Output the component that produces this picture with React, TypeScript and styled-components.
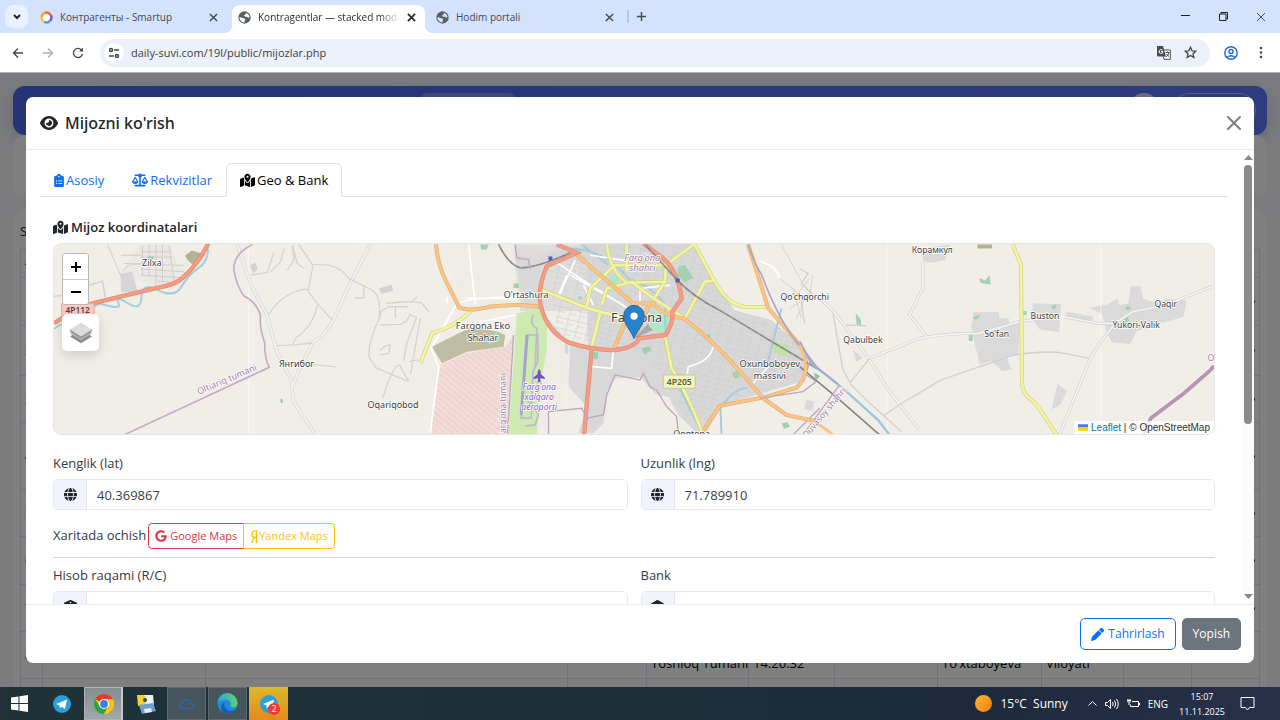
import React from "react";
import styled, { createGlobalStyle, css } from "styled-components";
import {
  FaEye,
  FaScaleBalanced,
  FaMapLocationDot,
  FaGlobe,
  FaGoogle,
  FaYandex,
  FaBuildingColumns,
  FaLandmark,
  FaClipboardList,
} from "react-icons/fa6";

const GlobalStyle = createGlobalStyle`
  *, *::before, *::after { box-sizing: border-box; }
  html, body { margin: 0; }
  body {
    font-family: "Open Sans", "Noto Sans", sans-serif;
    font-size: 13px;
    line-height: 20px;
    color: #212529;
  }
  button, input { font: inherit; color: inherit; }
  button { padding: 0; border: 0; background: none; cursor: pointer; }
  svg { display: block; flex: none; }
`;

const Desktop = styled.div`
  display: flex;
  flex-direction: column;
  height: 100vh;
  overflow: hidden;
`;

/* ---------- browser chrome ---------- */

const TabStrip = styled.header`
  display: flex;
  align-items: flex-end;
  height: 33px;
  flex: none;
  background: #d3e2fd;
  color: #454a52;
`;

const TabSearch = styled.button`
  display: grid;
  place-items: center;
  width: 23px;
  height: 23px;
  margin: 0 6px 5px 5px;
  border-radius: 8px;
  background: #eaf1fe;
`;

const Tab = styled.div<{ $active?: boolean }>`
  position: relative;
  display: flex;
  align-items: center;
  gap: 7px;
  flex: 0 1 198px;
  min-width: 0;
  height: 28px;
  padding: 0 14px 4px 6px;
  font-size: 10px;
  ${(p) =>
    p.$active &&
    css`
      flex-basis: 193px;
      margin-right: 5px;
      padding-right: 9px;
      border-radius: 8px 8px 0 0;
      background: #fff;
      color: #2a2d32;
      &::before,
      &::after {
        content: "";
        position: absolute;
        bottom: 0;
        width: 8px;
        height: 8px;
      }
      &::before {
        left: -8px;
        background: radial-gradient(circle at 0 0, transparent 8px, #fff 8px);
      }
      &::after {
        right: -8px;
        background: radial-gradient(circle at 100% 0, transparent 8px, #fff 8px);
      }
    `}
`;

const TabTitle = styled.span<{ $fade?: boolean }>`
  flex: 1;
  min-width: 0;
  overflow: hidden;
  white-space: nowrap;
  ${(p) => p.$fade && "mask-image: linear-gradient(90deg, #000 85%, transparent);"}
`;

const IconButton = styled.button`
  display: grid;
  place-items: center;
  flex: none;
`;

const NewTab = styled(IconButton)`
  width: 26px;
  height: 33px;
  position: relative;
  &::before {
    content: "";
    position: absolute;
    left: -1px;
    top: 10px;
    width: 2px;
    height: 13px;
    background: #a9c9fb;
  }
`;

const WindowControls = styled.div`
  display: flex;
  margin-left: auto;
`;

const WindowButton = styled(IconButton)`
  width: 38px;
  height: 33px;
`;

const Toolbar = styled.div`
  display: flex;
  align-items: center;
  height: 40px;
  flex: none;
  padding: 0 4px 0 3px;
  background: #fff;
  border-bottom: 1px solid #b4b6ba;
  color: #43474c;
`;

const NavButton = styled(IconButton)`
  width: 30px;
  height: 30px;
`;

const Omnibox = styled.div`
  display: flex;
  align-items: center;
  flex: 1;
  height: 28px;
  margin: 0 6px 0 7px;
  padding: 0 13px 0 4px;
  gap: 7px;
  border-radius: 14px;
  background: #ebf0fa;
  font-size: 11px;
`;

const SiteInfo = styled(IconButton)`
  width: 20px;
  height: 20px;
  border-radius: 50%;
  background: #fff;
`;

const Address = styled.input`
  flex: 1;
  min-width: 0;
  padding: 0;
  border: 0;
  outline: 0;
  background: none;
  color: #3c4045;
`;

const OmniboxActions = styled.div`
  display: flex;
  gap: 13px;
`;

/* ---------- page behind the dialog ---------- */

const Viewport = styled.main`
  position: relative;
  flex: 1;
  min-height: 0;
  overflow: hidden;
  background: #f6f7fc;
`;

const Page = styled.div`
  padding: 13px 13px 0;
`;

const NavBar = styled.nav`
  display: flex;
  justify-content: flex-end;
  align-items: flex-start;
  gap: 14px;
  height: 49px;
  padding: 7px 11px;
  border-radius: 12px;
  background: linear-gradient(90deg, #4a66ee, #5c78ff);
  box-shadow: 0 4px 14px #c9cfe8;
`;

const NavSearch = styled.div`
  width: 96px;
  height: 26px;
  margin-right: auto;
  margin-left: 396px;
  border-radius: 8px;
  background: #8295ee;
`;

const Avatar = styled.div`
  width: 28px;
  height: 28px;
  border-radius: 50%;
  background: #d8dcf0;
`;

const UserPill = styled.div`
  width: 84px;
  height: 34px;
  border: 1px solid #b4c0f8;
  border-radius: 17px;
`;

const Card = styled.section<{ $flat?: boolean }>`
  padding: ${(p) => (p.$flat ? "30px" : "9px 7px")};
  margin-bottom: ${(p) => (p.$flat ? "13px" : "0")};
  border-radius: 12px;
  background: #fff;
`;

const SearchLabel = styled.p`
  margin: 4px 0 8px;
`;

const Grid = styled.table`
  width: 100%;
  border-collapse: collapse;
  table-layout: fixed;
  color: #000;
  td, th {
    padding: 3px 4px;
    border: 1px solid #dfe1fb;
    text-align: left;
    vertical-align: middle;
    line-height: 17px;
    white-space: nowrap;
    overflow: hidden;
  }
`;

const GridRow = styled.tr<{ $height: number }>`
  height: ${(p) => p.$height}px;
`;

const RowLink = styled.a`
  display: flex;
  justify-content: flex-end;
  color: #0d3f8f;
`;

/* ---------- dialog ---------- */

const Backdrop = styled.div`
  position: absolute;
  inset: 0;
  display: flex;
  padding: 24px 26px;
  background: rgba(0, 0, 0, 0.5);
`;

const Dialog = styled.section`
  display: flex;
  flex-direction: column;
  flex: 1;
  min-width: 0;
  border-radius: 7px;
  background: #fff;
  overflow: hidden;
`;

const DialogHeader = styled.header`
  display: flex;
  align-items: center;
  justify-content: space-between;
  flex: none;
  height: 53px;
  padding: 0 13px 0 14px;
  border-bottom: 1px solid #e9ebee;
`;

const DialogTitle = styled.h1`
  display: flex;
  align-items: center;
  gap: 7px;
  margin: 0;
  font-family: "Noto Sans", "Open Sans", sans-serif;
  font-size: 16px;
  font-weight: 500;
  line-height: 24px;
`;

const DialogMain = styled.div`
  display: flex;
  flex: 1;
  min-height: 0;
`;

const DialogScroll = styled.div`
  flex: 1;
  min-width: 0;
  padding: 13px 14px 0;
  overflow-y: auto;
  scrollbar-width: none;
`;

const ScrollBar = styled.div`
  display: flex;
  flex-direction: column;
  align-items: center;
  gap: 5px;
  flex: none;
  width: 12px;
  padding: 5px 0;
  background: #fcfcfc;
  color: #8a8a8a;
`;

const ScrollTrack = styled.div`
  flex: 1;
  width: 8px;
`;

const ScrollThumb = styled.div`
  height: 61%;
  border-radius: 4px;
  background: #8b8b8b;
`;

const TabList = styled.div`
  display: flex;
  border-bottom: 1px solid #dee2e6;
`;

const TabButton = styled.button<{ $active?: boolean }>`
  display: flex;
  align-items: center;
  gap: 2px;
  height: 34px;
  margin-bottom: -1px;
  padding: 0 13px;
  border: 1px solid transparent;
  border-radius: 6px 6px 0 0;
  color: #0d6efd;
  ${(p) =>
    p.$active &&
    css`
      color: #000;
      background: #fff;
      border-color: #dee2e6 #dee2e6 #fff;
    `}
`;

const ClipboardIcon = styled(FaClipboardList)`
  width: 10px;
  height: 13px;
`;

const YandexIcon = styled(FaYandex)`
  width: 8px;
  height: 13px;
`;

const Pane = styled.div`
  padding: 20px 13px;
`;

const PaneTitle = styled.h2`
  display: flex;
  align-items: center;
  gap: 3px;
  margin: 0 0 6px;
  font-size: 13px;
  font-weight: 600;
  line-height: 20px;
`;

const FieldRow = styled.div`
  display: grid;
  grid-template-columns: 1fr 1fr;
  gap: 13px;
`;

const FieldLabel = styled.label`
  display: block;
  margin-bottom: 6px;
  color: #343a40;
`;

const InputGroup = styled.div`
  display: flex;
  height: 31px;
  border: 1px solid #e6e8ee;
  border-radius: 5px;
  overflow: hidden;
`;

const InputAddon = styled.span`
  display: flex;
  align-items: center;
  justify-content: center;
  width: 33px;
  border-right: 1px solid #e2e6f2;
  background: #f1f4ff;
`;

const TextInput = styled.input`
  flex: 1;
  min-width: 0;
  padding: 0 10px;
  border: 0;
  outline: 0;
  background: #fff;
  color: #3a3f44;
`;

const OpenRow = styled.div`
  display: flex;
  align-items: flex-start;
  gap: 2px;
  margin: 13px 0 8px;
  color: #343a40;
  line-height: 24px;
`;

const LinkGroup = styled.div`
  display: flex;
`;

const MapLink = styled.a<{ $color: string; $side: "left" | "right" }>`
  display: flex;
  align-items: center;
  gap: ${(p) => (p.$side === "left" ? "3px" : "1px")};
  height: 26px;
  padding: 0 6px;
  margin-left: ${(p) => (p.$side === "left" ? "0" : "-1px")};
  border: 1px solid ${(p) => p.$color};
  border-radius: ${(p) => (p.$side === "left" ? "4px 0 0 4px" : "0 4px 4px 0")};
  color: ${(p) => p.$color};
  font-size: 11px;
  text-decoration: none;
`;

const Divider = styled.hr`
  margin: 0 0 7px;
  border: 0;
  border-top: 1px solid #d3d4d5;
`;

const DialogFooter = styled.footer`
  display: flex;
  align-items: center;
  justify-content: flex-end;
  gap: 6px;
  flex: none;
  height: 59px;
  padding: 0 13px;
  border-top: 1px solid #eceef1;
`;

const Button = styled.button<{ $primary?: boolean }>`
  display: flex;
  align-items: center;
  gap: 4px;
  height: 32px;
  padding: 0 10px;
  border: 1px solid ${(p) => (p.$primary ? "#0d6efd" : "#6c757d")};
  border-radius: 5px;
  background: ${(p) => (p.$primary ? "#fff" : "#6c757d")};
  color: ${(p) => (p.$primary ? "#0d6efd" : "#fff")};
  font-size: 12px;
`;

/* ---------- map ---------- */

const MapFrame = styled.div`
  position: relative;
  height: 192px;
  margin-bottom: 18px;
  border: 1px solid #e4e6ea;
  border-radius: 8px;
  background: #f1eee8;
  overflow: hidden;
`;

const MapCanvas = styled.svg`
  width: 100%;
  height: 100%;
`;

const MapControls = styled.div`
  position: absolute;
  left: 8px;
  top: 9px;
  display: flex;
  flex-direction: column;
  gap: 9px;
`;

const ZoomBox = styled.div`
  width: 27px;
  border: 1px solid #b9b8b4;
  border-radius: 3px;
  overflow: hidden;
`;

const ZoomButton = styled.button`
  display: grid;
  place-items: center;
  width: 100%;
  height: 25px;
  background: #fff;
  color: #000;
  & + & { border-top: 1px solid #ccc; }
`;

const LayersButton = styled.button`
  display: grid;
  place-items: center;
  width: 37px;
  height: 37px;
  border-radius: 5px;
  background: #fff;
  box-shadow: 0 4px 12px rgba(0, 0, 0, 0.15);
`;

const Attribution = styled.div`
  position: absolute;
  right: 0;
  bottom: 0;
  display: flex;
  align-items: center;
  gap: 3px;
  padding: 0 4px;
  background: rgba(255, 255, 255, 0.8);
  color: #333;
  font: 10px/13px "Liberation Sans", sans-serif;
  a { color: #0078a8; text-decoration: none; }
`;

/* ---------- taskbar ---------- */

const TaskBar = styled.footer`
  display: flex;
  align-items: center;
  height: 33px;
  flex: none;
  background: linear-gradient(90deg, #1f3238 0%, #1e2f37 45%, #1c2a3c 75%, #28304a 100%);
  color: #fff;
`;

const AppGroup = styled.div<{ $gap: number }>`
  display: flex;
  gap: ${(p) => p.$gap}px;
  margin-right: 2px;
`;

const AppButton = styled.button<{ $tone?: "active" | "open" | "alert" }>`
  display: grid;
  place-items: center;
  width: 39px;
  height: 33px;
  ${(p) =>
    p.$tone === "active" &&
    "background: linear-gradient(#858e90, #a0a8a9); box-shadow: inset -2px 0 #c2c7c8, inset 0 0 0 1px #aeb4b5;"}
  ${(p) => p.$tone === "open" && "background: #46555c; box-shadow: inset 0 0 0 1px #5d6b71;"}
  ${(p) => p.$tone === "alert" && "background: linear-gradient(#dcb92c, #e68a1e);"}
`;

const Tray = styled.div`
  display: flex;
  align-items: center;
  gap: 8px;
  margin-left: auto;
  padding-right: 25px;
  font-size: 10px;
`;

const Weather = styled.div`
  display: flex;
  align-items: center;
  gap: 8px;
  margin-right: 12px;
  font-size: 12px;
  white-space: pre;
`;

const Sun = styled.span`
  width: 17px;
  height: 17px;
  border-radius: 50%;
  background: linear-gradient(135deg, #fdb92b, #f07a1a);
`;

const Clock = styled.time`
  margin: 0 7px 0 3px;
  text-align: center;
  font-size: 9px;
  line-height: 15px;
`;

/* ---------- drawings ---------- */

const Cross = ({ size = 9, width = 2 }: { size?: number; width?: number }) => (
  <svg width={size} height={size} viewBox="0 0 10 10" stroke="currentColor" strokeWidth={width} fill="none">
    <path d="M1 1l8 8M9 1l-8 8" />
  </svg>
);

const PenIcon = () => (
  <svg width="13" height="13" viewBox="0 0 512 512" fill="currentColor">
    <path d="M362.700 19.300L314.300 67.700 444.300 197.700l48.400-48.400c25-25 25-65.500 0-90.500L453.300 19.300c-25-25-65.500-25-90.500 0zm-71 71L58.600 323.500c-10.400 10.400-18 23.300-22.200 37.400L1 481.200C-1.500 489.700 .8 498.800 7 505s15.300 8.500 23.700 6.100l120.300-35.400c14.100-4.200 27-11.800 37.400-22.200L421.700 220.300 291.700 90.300z" />
  </svg>
);

const GlobeFavicon = ({ ground = "#d3e2fd" }: { ground?: string }) => (
  <svg width="13" height="13" viewBox="0 0 16 16">
    <circle cx="8" cy="8" r="7.600" fill="#595e64" />
    <path d="M9.500 2.200c2.800.7 4.600 3 4.700 5.600l-1.700.6-1.300-1.400H8.600L7.400 5.600l1.200-1.200 1.300-.3z" fill={ground} />
    <path d="M1.800 7.500l3.700 1 2.300.6 1.300 1.500-1 1.500.2 2c-3.500.4-6.700-2.600-6.500-6.600z" fill={ground} />
  </svg>
);

const RingFavicon = () => (
  <svg width="13" height="13" viewBox="0 0 16 16" fill="none" strokeWidth="3">
    <circle cx="8" cy="8" r="6" fill="#fff" />
    <path d="M2 8a6 6 0 0 1 4-5.700" stroke="#f0a030" />
    <path d="M6 2.300A6 6 0 0 1 13 4.700" stroke="#e8684a" />
    <path d="M13 4.700A6 6 0 0 1 12.200 12.200" stroke="#7a52c0" />
    <path d="M12.200 12.200A6 6 0 0 1 5 13.200" stroke="#3fa0e0" />
    <path d="M5 13.200A6 6 0 0 1 2 8" stroke="#f3c64a" />
  </svg>
);

const TelegramIcon = ({ badge }: { badge?: string }) => (
  <svg width="26" height="26" viewBox="0 0 26 26">
    <circle cx="13" cy="13" r="9" fill="#2b9fd8" />
    <path d="M7 13l11-4.500-2 9.500-3.500-2.300-1.700 1.600-.4-3z" fill="#fff" />
    {badge && (
      <>
        <circle cx="18" cy="18" r="6" fill="#ee3b35" />
        <text x="18" y="21" textAnchor="middle" fontSize="9" fill="#fff">{badge}</text>
      </>
    )}
  </svg>
);

const ChromeIcon = () => (
  <svg width="20" height="20" viewBox="0 0 20 20">
    <circle cx="10" cy="10" r="10" fill="#fbc116" />
    <path d="M10 10L1.300 5A10 10 0 0 1 18.700 5z" fill="#e33b2e" />
    <path d="M1.300 5A10 10 0 0 0 10 20l4.300-7.500L10 10 5.700 12.500z" fill="#2aa24c" />
    <path d="M10 5h8.700A10 10 0 0 1 10 20l4.300-7.500z" fill="#fbc116" />
    <circle cx="10" cy="10" r="5" fill="#fff" />
    <circle cx="10" cy="10" r="3.900" fill="#3b7de8" />
  </svg>
);

const FilesIcon = () => (
  <svg width="20" height="20" viewBox="0 0 20 20">
    <path d="M3 1h14l1 10-13 2z" fill="#eef2f4" />
    <path d="M1 1h7l2 2v8l-8 1z" fill="#f6cf33" />
    <path d="M3 11l14-2 3 8-14 3z" fill="#6ea0cf" />
    <path d="M8 15l7-1 1 4-7 1z" fill="#eaf1f6" />
    <circle cx="9" cy="6" r="2" fill="#3d4548" />
  </svg>
);

const EdgeIcon = () => (
  <svg width="21" height="21" viewBox="0 0 21 21">
    <defs>
      <linearGradient id="edgeTop" x1="0" y1="0" x2="1" y2="0">
        <stop offset="0" stopColor="#2aa7e0" />
        <stop offset="1" stopColor="#5fd36a" />
      </linearGradient>
    </defs>
    <circle cx="10.500" cy="10.500" r="10" fill="#1e8ad8" />
    <path d="M.5 10A10 10 0 0 1 20.500 10c0 3-2 4.500-4.500 4.500-2 0-3-.8-2.500-2C14.500 9 12 6.500 8.500 6.500S1.500 8 .5 10z" fill="url(#edgeTop)" />
    <path d="M8 9c-2 3 0 8 5 9 2.500.4 4.500-.5 5.500-1.500-2 3.500-7 5-11 3.500C3 18 3 11 8 9z" fill="#1b5cae" />
  </svg>
);

const label = { textAnchor: "middle" as const, fill: "#3c3c3c", stroke: "#fff", strokeWidth: 4, paintOrder: "stroke" };

const secondaryRoads =
  "M0 385l35-90q70-20 120-70M355 160l150 60 110 30M560 28q10 80 60 115l115-3 3-50 85-64 60 110q40 75 95 80h70M640 145l60 45 95 60 60-110 35-5M500 215l10-55 75-70h150M540 235l-25 100M545 210l15-50 80-20M620 28v80M735 140l-35 55M735 300l20 100q50 80 95 200";
const primaryRoads =
  "M47 28q5 60 30 110l40 80q30 12 90-3 90-10 150 0M460 50l180 155h60q25 35 90 45 90 60 240 240l70 50 90 20M640 205L580 345M690 205l-45 100M985 28l60 190 85 100q30 40 30 80-5 40-30 60l-100 30-130 25-50 75";
const ringRoad =
  "M410 28l60 25-90 40q-30 70-18 120 20 80 85 110 80 25 140 22 60-8 70-35l80-10q25-40 20-70l28-40q-10-80-55-120l-60-45M515 340L492 600";
const railway = "M235 28q30 60 65 70 50 0 150-45M675 28l100 110q50 50 120 85l300 180";
const westHighway = "M40 265q60-45 115-60l190-46q60-10 80-30 50-45 78-105";
const westRoads = "M590 28l40 120 48 90 30 110 45 90 5 60 65 100M990 28l-58 110-55 120q-20 40-60 65l-45 90-15 40";
const eastRoads =
  "M370 80v80l-40 80 50 62M210 370l150-60q80-15 180-15l120-35 60-8M800 246l90 18 55 2 55-36 100-20 140-56M945 270q-60 70-80 120L780 600M20 170q60 20 120 110l80 110 50 80 90 115";
const eastSecondary = "M640 28l25 60 3 350q0 30 15 45l30 28 60 90";

const Road = ({ d, casing, fill, width }: { d: string; casing: string; fill: string; width: number }) => (
  <>
    <path d={d} stroke={casing} strokeWidth={width + 4} />
    <path d={d} stroke={fill} strokeWidth={width} />
  </>
);

function FerganaMap() {
  return (
    <MapCanvas viewBox="0 0 3486 576" preserveAspectRatio="xMidYMid slice" fontFamily="Noto Sans, sans-serif">
      <defs>
        <pattern id="hatch" width="14" height="14" patternUnits="userSpaceOnUse" patternTransform="rotate(40)">
          <rect width="14" height="14" fill="#f2dcd8" />
          <path d="M0 2h14" stroke="#efcbc8" strokeWidth="3" />
        </pattern>
        <pattern id="blocks" width="32" height="32" patternUnits="userSpaceOnUse" patternTransform="rotate(14)">
          <path d="M0 10h32M12 0v32M12 24h20" stroke="#cfcece" strokeWidth="2" fill="none" />
        </pattern>
      </defs>

      <g transform="translate(-39 -24)" fill="none">
        <path d="M300 28h90l20 60 30 30-30 30-60 8-50-20-50-10 10-50z" fill="#ebe9e4" />
        <path d="M305 30v90M325 30v95M345 26v130M365 30v110M385 30l15 110M300 50h90M300 66h95M240 60h62M250 85l180 6M300 102l130 8M300 120l120 8M350 138l50 4M245 110q10-25 50-24M200 28l38 90 15 50" stroke="#cfcdcc" strokeWidth="3" />
        <path d="M240 115l35-5 15 60-50 2z" fill="#d6d5da" />
        <path d="M433 62l20-16 40 12-28 34q-22-8-32-30z" fill="#b5b294" />
        <path d="M322 64h16v8h-16z" fill="#8dc9a5" />
        <path d="M145 150l40-12 8 50M40 184l26-4" stroke="#d4d3d8" strokeWidth="5" />
        <path d="M502 40q0 40-30 60t-50 55-70 10-50 20-40 20-30-3-30 10-40 5M40 282q20-18 50-20" stroke="#9cd0e2" strokeWidth="6" />
        <Road d={westHighway} casing="#dd8a72" fill="#f69b80" width={9} />
        <path d="M623 26v574" stroke="#f9f7f4" strokeWidth="3" />
        <Road d={westRoads} casing="#d6d5d8" fill="#f4f2f1" width={6} />
        <path d="M630 120l50-8 20-60M690 110l30-30 10-40M740 105l20-30-5-45 15 55 20 15M775 28l40 60 50 2q40 10 60 40l70 35q22 14 22 50v34q-38 80-30 120l20 30 95 40M683 240q30-50 80-70 30-12 40-5l15-75M800 165l30 40 45 50M830 210q-10 60-65 100l-10 20M710 332l60-3 45-5M970 150v38h-28M815 388l70 8M1020 245v-15l25-15h58M1020 270l60-2q25-8 28-30l20 10-30 80-8 50M1065 215v35M1020 345q15-15 30-15l-5 25-25 5M1105 380l30-5M1140 250l-30 170M1105 440l-28-50q-20 0-50 100M1115 200l15-15M1035 205q90-10 110 0l20 25" stroke="#d6d2d0" strokeWidth="4" />
        <path d="M635 28q-60 30-55 80 10 50 30 75 40 20 50 60-5 30 12 80 0 50 14 74L250 600" stroke="#c6aec6" strokeWidth="5" />
        <path d="M628 90l16-8 8 20-14 14zM1016 160l38-12 4 20-36 8z" fill="#d3d1d3" />
        <path d="M720 492h6v12h-6z" fill="#8dc9a5" />
        <path d="M62 206h98v34h-98z" fill="#f3cdc5" stroke="#e8a99c" strokeWidth="3" />
      </g>

      <g transform="translate(1101 -24)" fill="none">
        <path d="M40 28h240l20 80 50 50 5 50-190 5-30-30z" fill="#efece6" />
        <path d="M280 28h230v200H300z" fill="#dedddc" />
        <path d="M355 60L500 26h325l60 110 60 90 110 30 80 70 25 80-20 35-105 32-125 35-40 65-14 30-30-12-50-50-30-55-35-5-20-20-30-35-75 5-25 40-6 130-50 50-5-560z" fill="#d9d8d8" />
        <path d="M285 60l70 10 10 160 90 100-5 115 60 50v-120l-80-20-115-130z" fill="#d9d8d8" />
        <path d="M355 60L500 26h325l60 110 60 90 110 30 80 70 25 80-20 35-105 32-125 35-40 65-74-32-90-140-35-55-105 2-150-40-35-200z" fill="url(#blocks)" />
        <path d="M590 425l25 60-60 115H385l5-70 55-10v-190l75 25v170l30 20z" fill="#f1eee8" />
        <path d="M450 330h140v85l-30 20-10 130-30 30h-45l25-80-55-60z" fill="#d9d8d8" />
        <path d="M375 245q20 50 60 80l-10 200-40 10-30 60h-35z" fill="#efece6" />
        <path d="M35 335l110-55q70 0 110 20l-5 35-110 15-75 35z" fill="#bfbda2" />
        <path d="M60 390l80-35 115-20 25-35-20 300H30z" fill="url(#hatch)" />
        <path d="M290 235l65-15 25 40v80l-20 120-10 140h-85z" fill="#cdebb0" />
        <path d="M195 310l35-18 10 25-35 10z" fill="#a8e0c4" />
        <path d="M318 300h35v80l-15 30-5 140h-30z" stroke="#bdb9cf" strokeWidth="5" />
        <path d="M321 300L303 540" stroke="#a8a4c8" strokeWidth="9" />
        <path d="M315 490q30 30 40 50l-10 30-30 3M338 240q-10 30 12 40l-5 120" stroke="#bdb9cf" strokeWidth="5" />
        <path d="M555 135l30-20 15 15-30 40zM540 105l20 8-5 20-15-10zM690 225l60 20-5 50-50-10z" fill="#aee8c6" />
        <path d="M775 95l20-6 25 40-25 14-20-20zM180 28h26l-8 16h-15zM665 340l25-6 5 12-22 14zM280 145h16v14h-16zM1085 566l18-4 8 14-18 6zM935 415l18-8 8 18-14 8z" fill="#a3d0ae" />
        <path d="M1055 318l58 14-12 32-35-8z" fill="#c0e3a5" />
        <path d="M475 184h10v8h-10zM862 298h10v14h-10zM520 352h14v20h-14z" fill="#83dcb4" />
        <path d="M445 40q110 0 180 90 80 30 110 80 0 130 20 190t90 190M640 150l60 40M905 600l-3-80q40-60 80-60M1045 380l40-160M485 28q50 40 80 60" stroke="#a5cbdc" strokeWidth="6" />
        <path d="M400 75l80 55 160 100M465 75l-45 100M510 60l130 20M450 120l150 85M490 150l30 60M660 240v-80l90-10M440 120l-25 60M140 190h140M80 205v-20M880 335q-10 45-75 60l-5 40M515 395l60 5 5-60M1000 445l55-60M1020 80q50 10 60 50M30 335l25 60-25 200M285 240l-105 20M35 335l75-130q60-20 175-20l75-10M145 28l20 180" stroke="#fff" strokeWidth="5" />
        <path d="M1085 28l60 110M1080 130l50 40 20 40-20 40M1090 190l40-10 40-50M1110 220l60-40 10-60M1120 160l25 90" stroke="#d4d2d1" strokeWidth="3" />
        <Road d={secondaryRoads} casing="#d0d085" fill="#f1f59f" width={8} />
        <Road d={primaryRoads} casing="#e3b070" fill="#fbc486" width={8} />
        <Road d={ringRoad} casing="#e08c76" fill="#f59c86" width={9} />
        <path d={railway} stroke="#858588" strokeWidth="5" />
        <path d={railway} stroke="#b0afb0" strokeWidth="2" strokeDasharray="12 12" />
        <path d="M385 64h12v12h-12zM767 130h12v12h-12z" fill="#4e5eb0" />
        <path d="M285 28l5 40 35 5 5 30M385 600v-70l100-10 15 30 50-10 10-60 25-60 75 15 10-20 20 40 20 10 30 50 30 30 5 50 30 40 50 5" stroke="#bfa6c0" strokeWidth="4" />
        <path d="M985 28q20 60 40 90 60 160 130 230l45 60" stroke="#a6a6c8" strokeWidth="5" />
        <path d="M280 300L262 600M1200 520l-90 90M1160 420l30 20-40 30-130 20" stroke="#bfa6c0" strokeWidth="4" />
        <path d="M730 420h96v40h-96z" fill="#f3f5bd" stroke="#c6c88c" strokeWidth="3" />
      </g>

      <g transform="translate(2241 -24)" fill="none">
        <path d="M370 40l80-12-12 45-36 10-32-5z" fill="#dadada" />
        <path d="M522 232l76-2 2 20h28l2 20 32-10-5 100-35 5 15 38-30 6-30-32-36 12-20-85-5-30zM700 205l85 2-5 85-60-10-20-30zM870 218l55-10 30-18 5 20 28-5 5-50 30-4 10 40 35 12 35-12 60 5-10 50-65 18-75 25-20 38-55-5-15-30-15-55zM775 446l28 22-18 40-28 16zM20 494l24 6-6 28-24-6zM160 345l30 25-20 10z" fill="#dbdada" />
        <path d="M803 230l80 15-5 16-78-14z" fill="#dadada" />
        <path d="M263 26v574M905 26v574" stroke="#f8f6f3" strokeWidth="3" />
        <path d="M534 28h44v12h-44z" fill="#b5b38d" />
        <path d="M538 128l20 8 12-16 4 28-30-4zM168 234l16 20v18l-12 2zM523 246l18-8-4 12-12 4zM508 300h12v18h-12zM758 212l14-4-4 14-12-2zM980 214h14v10h-14zM976 240h12v24h-12z" fill="#a3d0ae" />
        <path d="M670 228h12v12h-12z" fill="#8fe0b8" />
        <Road d={eastRoads} casing="#d3d2d3" fill="#f6f5f3" width={5} />
        <path d="M210 370l-60 75M255 540l60-40 110-65 220-75q100-15 150-5l75 15M0 100l25 15-20 30 30 30-30 30 10 60M100 235l30 170 25 45 50 50 100 90M140 270l60 2" stroke="#d3cfcd" strokeWidth="4" />
        <Road d={eastSecondary} casing="#d0d085" fill="#f1f59f" width={8} />
        <path d="M0 395l120 100 120 105" stroke="#858588" strokeWidth="5" />
        <path d="M0 320l35 65 100 80 100 90 35 45" stroke="#9cc8dc" strokeWidth="7" />
        <path d="M0 320l35 65 80 62" stroke="#a6a6c8" strokeWidth="5" />
        <path d="M10 600l110-150M30 380l-20 60" stroke="#bfa6c0" strokeWidth="4" />
        <path d="M0 550q40 0 100 50M0 330q30 70 10 100l-10 10" stroke="#fbc486" strokeWidth="9" />
        <path d="M42 412l20 12-14 12z" fill="#8dc99f" />
        <path d="M1035 600l20-50 100-75 80-70 10-12" stroke="#b796b4" strokeWidth="11" />
      </g>

      <g transform="translate(-39 -24)" {...label} fontSize="27">
        <text x="333" y="94">Zilxa</text>
        <text x="768" y="397">Янгибог</text>
        <text x="1058" y="520">Oqariqobod</text>
        <text x="110" y="234" fill="#6b3c36" stroke="none" fontWeight="600" fontSize="25">4P112</text>
        <text transform="translate(562 442) rotate(-23)" fill="#a37ba6" fontSize="27">Oltiariq tumani</text>
      </g>
      <g transform="translate(1101 -24)" {...label} fontSize="28">
        <text x="318" y="188" fontSize="27">O'rtashura</text>
        <text x="188" y="283">Fargona Eko</text>
        <text x="188" y="318">Shahar</text>
        <text x="650" y="261" fontSize="38">Farg'ona</text>
        <g fill="#a37ba6" fontStyle="italic">
          <text x="667" y="77">Farg'ona</text>
          <text x="667" y="109">shahri</text>
        </g>
        <g fill="#8461c4" fontStyle="italic" fontSize="26">
          <text x="357" y="466">Farg'ona</text>
          <text x="357" y="496">xalqaro</text>
          <text x="357" y="526">aeroporti</text>
        </g>
        <text x="1050" y="396">Oxunboboyev</text>
        <text x="1050" y="431">massivi</text>
        <text x="778" y="450" stroke="none" fontWeight="600" fontSize="26" fill="#5b5b35">4P205</text>
        <text x="815" y="606" fontSize="27">Qoqtepa</text>
        <text x="1155" y="194" fontSize="26">Qo'chqorchi</text>
        <text transform="translate(258 512) rotate(-90)" fill="#a37ba6" fontSize="25">Farg'ona tumani</text>
        <path d="M357 404q5 0 5 14l12 10v5l-13-4-1 10 5 4-8-2-8 2 5-4-1-10-13 4v-5l12-10q0-14 5-14z" fill="#7a52c0" stroke="none" />
      </g>
      <g transform="translate(2241 -24)" {...label} fontSize="26">
        <text x="398" y="53">Корамкул</text>
        <text x="190" y="325">Qabulbek</text>
        <text x="592" y="307">So'fan</text>
        <text x="737" y="252">Buston</text>
        <text x="1100" y="215">Qaqir</text>
        <text x="1011" y="280">Yukori-Valik</text>
        <text transform="translate(80 540) rotate(-50)" fill="#a37ba6">Quvasoy shahri</text>
        <text x="1236" y="378" fill="#a37ba6">O</text>
      </g>

      <g transform="translate(1101 -24)">
        <path d="M643 310l55-24-14-20z" fill="#555" opacity=".35" />
        <path d="M642 311c-8-24-31-42-31-69a31 31 0 0 1 62 0c0 27-23 45-31 69z" fill="#2a81cb" stroke="#2268a5" strokeWidth="3" />
        <circle cx="642" cy="243" r="11" fill="#fff" />
      </g>
    </MapCanvas>
  );
}

/* ---------- page data ---------- */

const columns = [22, 163, 362, 79, 102, 86, 103, 104, 82, 68, 68];
const rowHeights = [48, 50, 47, 67, 47, 48, 47, 47, 40];
const lastRow: Record<number, string> = { 4: "Toshloq Tumani", 5: "14:20:32", 7: "To‘xtaboyeva", 8: "Viloyati" };

function Field({ id, title, icon, value }: { id: string; title: string; icon: React.ReactNode; value: string }) {
  return (
    <div>
      <FieldLabel htmlFor={id}>{title}</FieldLabel>
      <InputGroup>
        <InputAddon>{icon}</InputAddon>
        <TextInput id={id} defaultValue={value} />
      </InputGroup>
    </div>
  );
}

function BrowserChrome() {
  return (
    <>
      <TabStrip>
        <TabSearch aria-label="Search tabs">
          <svg width="8" height="6" viewBox="0 0 8 6" fill="none" stroke="#22262b" strokeWidth="2"><path d="M1 1l3 3 3-3" /></svg>
        </TabSearch>
        <Tab><RingFavicon /><TabTitle>Контрагенты - Smartup</TabTitle><IconButton aria-label="Close tab"><Cross width={1.6} /></IconButton></Tab>
        <Tab $active><GlobeFavicon ground="#fff" /><TabTitle $fade>Kontragentlar — stacked modallar</TabTitle><IconButton aria-label="Close tab"><Cross /></IconButton></Tab>
        <Tab><GlobeFavicon /><TabTitle>Hodim portali</TabTitle><IconButton aria-label="Close tab"><Cross width={1.6} /></IconButton></Tab>
        <NewTab aria-label="New tab">
          <svg width="9" height="9" viewBox="0 0 9 9" stroke="currentColor" strokeWidth="1.500"><path d="M4.500 0v9M0 4.500h9" /></svg>
        </NewTab>
        <WindowControls>
          <WindowButton aria-label="Minimize">
            <svg width="9" height="9" viewBox="0 0 9 9" stroke="#222" strokeWidth="1"><path d="M0 3.500h9" /></svg>
          </WindowButton>
          <WindowButton aria-label="Restore">
            <svg width="9" height="9" viewBox="0 0 9 9" fill="none" stroke="#222"><path d="M.5 2h6.500v6.500H.5zM2 2V.5h6.500V7H7" /></svg>
          </WindowButton>
          <WindowButton aria-label="Close"><Cross size={10} width={1} /></WindowButton>
        </WindowControls>
      </TabStrip>
      <Toolbar>
        <NavButton aria-label="Back">
          <svg width="12" height="12" viewBox="0 0 12 12" fill="none" stroke="currentColor" strokeWidth="1.300"><path d="M11 6H1.500M6 1.500L1.500 6 6 10.500" /></svg>
        </NavButton>
        <NavButton aria-label="Forward">
          <svg width="12" height="12" viewBox="0 0 12 12" fill="none" stroke="#aaadb1" strokeWidth="1.300"><path d="M1 6h9.500M6 1.500L10.500 6 6 10.500" /></svg>
        </NavButton>
        <NavButton aria-label="Reload">
          <svg width="12" height="12" viewBox="0 0 12 12" fill="none" stroke="currentColor" strokeWidth="1.300"><path d="M10.500 7A4.600 4.600 0 1 1 9.300 2.700L10.500 4" /><path d="M11 .5v4H7z" fill="currentColor" stroke="none" /></svg>
        </NavButton>
        <Omnibox>
          <SiteInfo aria-label="Site information">
            <svg width="12" height="12" viewBox="0 0 12 12" fill="none" stroke="currentColor" strokeWidth="1.500"><circle cx="3" cy="3" r="1.500" /><path d="M6 3h5M1 9h5" /><circle cx="9" cy="9" r="1.500" /></svg>
          </SiteInfo>
          <Address aria-label="Address" defaultValue="daily-suvi.com/19l/public/mijozlar.php" />
          <OmniboxActions>
            <IconButton aria-label="Translate">
              <svg width="14" height="14" viewBox="0 0 14 14" fill="none">
                <path d="M5 4h8.300v9.300H7z" fill="#fff" stroke="#4a4e53" />
                <path d="M0 0h6l3 10.500H1a1 1 0 0 1-1-1z" fill="#4a4e53" />
                <path d="M5.500 4.200A1.900 1.900 0 1 0 6 5.600H4.200" stroke="#fff" />
                <path d="M8.500 6.500h4M10.500 5.500v1M12 6.500q-.5 2.500-3 4.500M9.500 8q1 1.500 2.500 2.500" stroke="#4a4e53" />
              </svg>
            </IconButton>
            <IconButton aria-label="Bookmark">
              <svg width="13" height="13" viewBox="0 0 13 13" fill="none" stroke="currentColor" strokeWidth="1.300"><path d="M6.500 1.300l1.600 3.500 3.700.4-2.800 2.500.8 3.700-3.300-1.900-3.300 1.900.8-3.700L1.200 5.200l3.700-.4z" /></svg>
            </IconButton>
          </OmniboxActions>
        </Omnibox>
        <NavButton aria-label="Profile">
          <svg width="14" height="14" viewBox="0 0 14 14" fill="none" stroke="#1f66e0" strokeWidth="1.400"><circle cx="7" cy="7" r="6.200" /><circle cx="7" cy="5.500" r="2" /><path d="M3 11.300q4-3 8 0" /></svg>
        </NavButton>
        <NavButton aria-label="Menu">
          <svg width="4" height="13" viewBox="0 0 4 13" fill="currentColor"><circle cx="2" cy="2" r="1.300" /><circle cx="2" cy="6.500" r="1.300" /><circle cx="2" cy="11" r="1.300" /></svg>
        </NavButton>
      </Toolbar>
    </>
  );
}

function CustomersPage() {
  return (
    <Page>
      <NavBar><NavSearch /><Avatar /><UserPill /></NavBar>
      <Card $flat />
      <Card>
        <SearchLabel>Sahifada</SearchLabel>
        <Grid>
          <colgroup>{columns.map((w, i) => <col key={i} style={{ width: `${w / 12.39}%` }} />)}</colgroup>
          <thead><GridRow $height={28}>{columns.map((_, i) => <th key={i}>{i === 0 ? "#" : ""}</th>)}</GridRow></thead>
          <tbody>
            {rowHeights.map((height, r) => (
              <GridRow key={r} $height={height}>
                {columns.map((_, c) => (
                  <td key={c}>
                    {c === 0 && r < 8 && r + 1}
                    {c === 10 && r < 7 && <RowLink href="#" aria-label="Ko'rish"><FaEye /></RowLink>}
                    {r === 7 && c in lastRow && <><br />{lastRow[c]}</>}
                  </td>
                ))}
              </GridRow>
            ))}
          </tbody>
        </Grid>
      </Card>
    </Page>
  );
}

const Glyph = ({ d }: { d: string }) => (
  <svg width="10" height="10" viewBox="0 0 10 10" stroke="currentColor" strokeWidth="2"><path d={d} /></svg>
);

function CustomerDialog() {
  return (
    <Dialog role="dialog" aria-labelledby="dialog-title">
      <DialogHeader>
        <DialogTitle id="dialog-title"><FaEye size={18} />Mijozni ko'rish</DialogTitle>
        <IconButton aria-label="Yopish">
          <svg width="14" height="14" viewBox="0 0 14 14" stroke="#7f7f7f" strokeWidth="2" strokeLinecap="round"><path d="M1 1l12 12M13 1L1 13" /></svg>
        </IconButton>
      </DialogHeader>
      <DialogMain>
        <DialogScroll>
          <TabList role="tablist">
            <TabButton role="tab"><ClipboardIcon />Asosiy</TabButton>
            <TabButton role="tab"><FaScaleBalanced size={16} />Rekvizitlar</TabButton>
            <TabButton role="tab" aria-selected $active><FaMapLocationDot size={15} />Geo &amp; Bank</TabButton>
          </TabList>
          <Pane role="tabpanel">
            <PaneTitle><FaMapLocationDot size={15} />Mijoz koordinatalari</PaneTitle>
            <MapFrame>
              <FerganaMap />
              <MapControls>
                <ZoomBox>
                  <ZoomButton aria-label="Zoom in"><Glyph d="M0 5h10M5 0v10" /></ZoomButton>
                  <ZoomButton aria-label="Zoom out"><Glyph d="M0 5h10" /></ZoomButton>
                </ZoomBox>
                <LayersButton aria-label="Layers">
                  <svg width="22" height="22" viewBox="0 0 26 26">
                    <path d="M0 17l13 8 13-8-3-2-10 6-10-6z" fill="#8d8d8d" />
                    <path d="M0 13l13 8 13-8-3-2-10 6-10-6z" fill="#a5a5a5" />
                    <path d="M0 9l13 8 13-8L13 1z" fill="#dcdcdc" />
                    <path d="M0 9l13 8 13-8v2l-13 8-13-8z" fill="#9a9a9a" />
                  </svg>
                </LayersButton>
              </MapControls>
              <Attribution>
                <svg width="10" height="7" viewBox="0 0 12 8"><path fill="#4c7be1" d="M0 0h12v4H0z" /><path fill="#ffd500" d="M0 4h12v4H0z" /></svg>
                <span><a href="#leaflet">Leaflet</a> | © OpenStreetMap</span>
              </Attribution>
            </MapFrame>
            <FieldRow>
              <Field id="lat" title="Kenglik (lat)" icon={<FaGlobe size={13} />} value="40.369867" />
              <Field id="lng" title="Uzunlik (lng)" icon={<FaGlobe size={13} />} value="71.789910" />
            </FieldRow>
            <OpenRow>
              <span>Xaritada ochish</span>
              <LinkGroup>
                <MapLink href="#google" $color="#dc3545" $side="left"><FaGoogle size={12} />Google Maps</MapLink>
                <MapLink href="#yandex" $color="#ffc107" $side="right"><YandexIcon />Yandex Maps</MapLink>
              </LinkGroup>
            </OpenRow>
            <Divider />
            <FieldRow>
              <Field id="account" title="Hisob raqami (R/C)" icon={<FaBuildingColumns size={13} />} value="" />
              <Field id="bank" title="Bank" icon={<FaLandmark size={13} />} value="" />
            </FieldRow>
          </Pane>
        </DialogScroll>
        <ScrollBar aria-hidden>
          <svg width="9" height="5" viewBox="0 0 9 5" fill="currentColor"><path d="M0 5l4.500-5L9 5z" /></svg>
          <ScrollTrack><ScrollThumb /></ScrollTrack>
          <svg width="9" height="5" viewBox="0 0 9 5" fill="currentColor"><path d="M0 0l4.500 5L9 0z" /></svg>
        </ScrollBar>
      </DialogMain>
      <DialogFooter>
        <Button $primary><PenIcon />Tahrirlash</Button>
        <Button>Yopish</Button>
      </DialogFooter>
    </Dialog>
  );
}

function WindowsTaskBar() {
  return (
    <TaskBar>
      <AppGroup $gap={3}>
        <AppButton aria-label="Start">
          <svg width="17" height="17" viewBox="0 0 17 17" fill="#fff"><path d="M0 2.500l7.500-1V8H0zM8.500 1.300L17 0v8H8.500zM0 9h7.500v6.500L0 14.500zM8.500 9H17v8l-8.500-1.200z" /></svg>
        </AppButton>
        <AppButton aria-label="Telegram"><TelegramIcon /></AppButton>
        <AppButton aria-label="Chrome" $tone="active"><ChromeIcon /></AppButton>
        <AppButton aria-label="Files"><FilesIcon /></AppButton>
      </AppGroup>
      <AppGroup $gap={2}>
        <AppButton aria-label="Cloud" $tone="open">
          <svg width="15" height="13" viewBox="0 0 15 13" fill="none" stroke="#2f62a8" strokeWidth="1.500"><path d="M4 11.500h7.500a2.500 2.500 0 0 0 .5-5 4.500 4.500 0 0 0-8.800-.5A2.800 2.800 0 0 0 4 11.500z" /></svg>
        </AppButton>
        <AppButton aria-label="Edge" $tone="open"><EdgeIcon /></AppButton>
        <AppButton aria-label="Telegram, 2" $tone="alert"><TelegramIcon badge="2" /></AppButton>
      </AppGroup>
      <Tray>
        <Weather><Sun />{"15°C  Sunny"}</Weather>
        <svg width="9" height="5" viewBox="0 0 9 5" fill="none" stroke="#fff"><path d="M.5 4.500l4-4 4 4" /></svg>
        <svg width="14" height="12" viewBox="0 0 14 12" fill="none" stroke="#fff"><path d="M.5 4.500h2l3-3v9l-3-3h-2zM7.500 4q1.500 2 0 4M9.500 2.500q2.500 3.500 0 7M11.500 1q3.500 5 0 10" /></svg>
        <svg width="13" height="9" viewBox="0 0 13 9" fill="none" stroke="#fff"><path d="M5 2.500h6.500v5H3.500v-2M12.500 4v2M0 1.500h4M1 0v3.500M3 0v3.500M2 3v3" /></svg>
        <span>ENG</span>
        <Clock>15:07<br />11.11.2025</Clock>
        <svg width="15" height="14" viewBox="0 0 15 14" fill="none" stroke="#fff"><path d="M1 .5h13v10H9.500L7.500 13l-2-2.500H1z" /></svg>
      </Tray>
    </TaskBar>
  );
}

export default function App() {
  return (
    <Desktop>
      <GlobalStyle />
      <BrowserChrome />
      <Viewport>
        <CustomersPage />
        <Backdrop><CustomerDialog /></Backdrop>
      </Viewport>
      <WindowsTaskBar />
    </Desktop>
  );
}
